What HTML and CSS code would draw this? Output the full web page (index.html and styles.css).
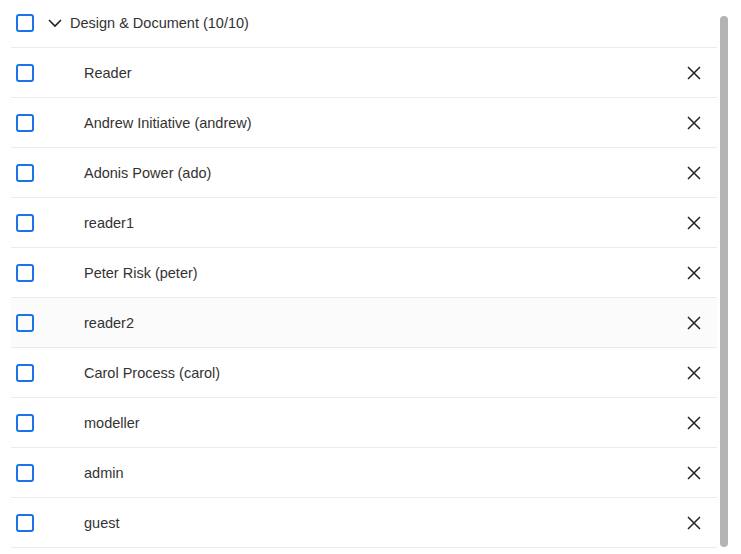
FILE: index.html
```html
<!DOCTYPE html>
<html lang="en">
<head>
    <meta charset="UTF-8">
    <title>Design & Document</title>
    <link rel="stylesheet" href="styles.css">
</head>
<body>
    <div class="panel">
        <div class="list">
            <div class="row group-row">
                <span class="check"></span>
                <svg class="chevron" width="16" height="16" viewBox="0 0 16 16"><path d="M2 5l6 6 6-6" fill="none" stroke="#222" stroke-width="1.6"/></svg>
                <span class="label">Design &amp; Document (10/10)</span>
            </div>
            <div class="row"><span class="check"></span><span class="label item">Reader</span><svg class="remove" viewBox="0 0 14 14"><path d="M1 1l12 12M13 1L1 13"/></svg></div>
            <div class="row"><span class="check"></span><span class="label item">Andrew Initiative (andrew)</span><svg class="remove" viewBox="0 0 14 14"><path d="M1 1l12 12M13 1L1 13"/></svg></div>
            <div class="row"><span class="check"></span><span class="label item">Adonis Power (ado)</span><svg class="remove" viewBox="0 0 14 14"><path d="M1 1l12 12M13 1L1 13"/></svg></div>
            <div class="row"><span class="check"></span><span class="label item">reader1</span><svg class="remove" viewBox="0 0 14 14"><path d="M1 1l12 12M13 1L1 13"/></svg></div>
            <div class="row"><span class="check"></span><span class="label item">Peter Risk (peter)</span><svg class="remove" viewBox="0 0 14 14"><path d="M1 1l12 12M13 1L1 13"/></svg></div>
            <div class="row hover"><span class="check"></span><span class="label item">reader2</span><svg class="remove" viewBox="0 0 14 14"><path d="M1 1l12 12M13 1L1 13"/></svg></div>
            <div class="row"><span class="check"></span><span class="label item">Carol Process (carol)</span><svg class="remove" viewBox="0 0 14 14"><path d="M1 1l12 12M13 1L1 13"/></svg></div>
            <div class="row"><span class="check"></span><span class="label item">modeller</span><svg class="remove" viewBox="0 0 14 14"><path d="M1 1l12 12M13 1L1 13"/></svg></div>
            <div class="row"><span class="check"></span><span class="label item">admin</span><svg class="remove" viewBox="0 0 14 14"><path d="M1 1l12 12M13 1L1 13"/></svg></div>
            <div class="row"><span class="check"></span><span class="label item">guest</span><svg class="remove" viewBox="0 0 14 14"><path d="M1 1l12 12M13 1L1 13"/></svg></div>
        </div>
        <div class="scrollbar"></div>
    </div>
</body>
</html>
```

FILE: styles.css
```css
body {
    margin: 0;
    background: #ffffff;
    font-family: "Liberation Sans", Arial, sans-serif;
    font-size: 14.5px;
    color: #333333;
}

.panel {
    position: relative;
    width: 741px;
    height: 554px;
    overflow: hidden;
}

.list {
    margin-left: 11px;
    width: 706px;
}

.row {
    display: flex;
    align-items: center;
    height: 49px;
    border-bottom: 1px solid #ebebeb;
}

.row.group-row {
    height: 45px;
    padding-bottom: 2px;
}

.row.hover {
    background: #fbfbfb;
}

.check {
    flex: none;
    width: 14px;
    height: 14px;
    margin-left: 5px;
    border: 2px solid #1a73e8;
    border-radius: 3px;
}

.chevron {
    flex: none;
    margin-left: 13px;
}

.label {
    margin-left: 7px;
    flex: 1;
}

.label.item {
    margin-left: 50px;
}

.remove {
    flex: none;
    width: 14px;
    height: 14px;
    margin-right: 16px;
    fill: none;
    stroke: #222222;
    stroke-width: 1.5;
}

.scrollbar {
    position: absolute;
    left: 720px;
    top: 16px;
    width: 8px;
    height: 531px;
    border-radius: 4px;
    background: #b4b4b4;
}
```
